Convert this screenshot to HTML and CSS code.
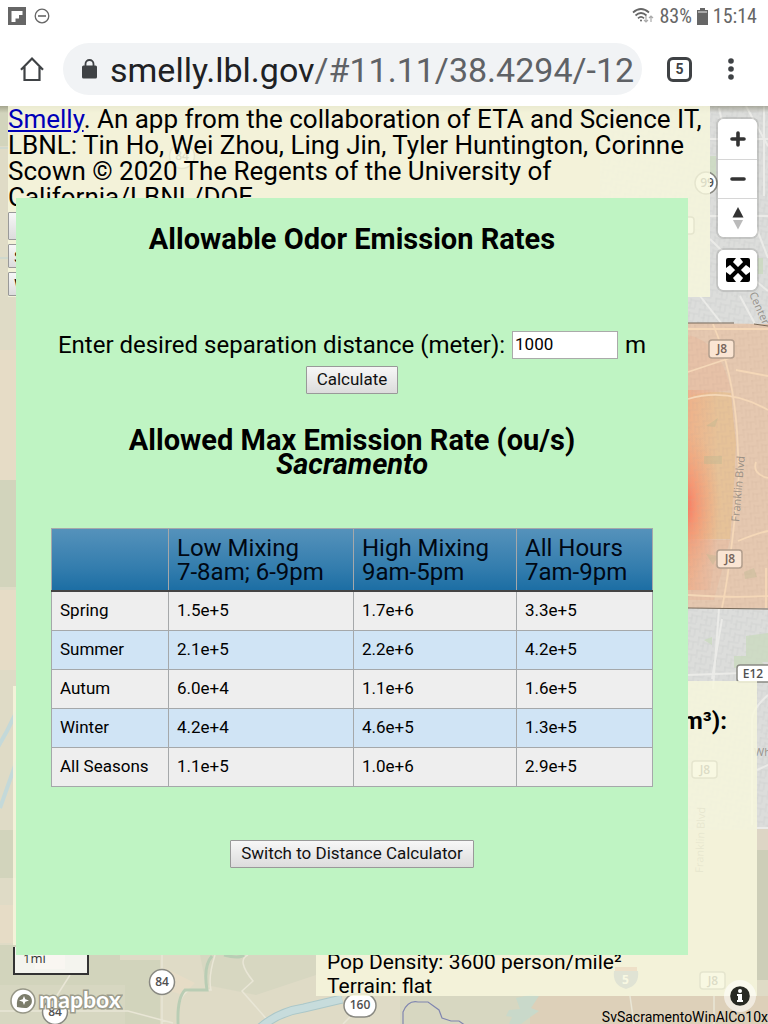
FILE: index.html
```html
<!DOCTYPE html>
<html lang="en">
<head>
<meta charset="utf-8">
<meta name="viewport" content="width=device-width, initial-scale=1">
<title>Smelly</title>
<link rel="stylesheet" href="styles.css">
</head>
<body>
<header class="chrome">
  <div class="status">
    <div class="status-group">
      <svg width="18" height="18" viewBox="0 0 18 18" aria-hidden="true"><path fill="#666" d="M0 0h18v18H0z"/><path fill="#fff" d="M3.500 4H14.500V8H11V11.500H7.500V15H3.500z"/></svg>
      <svg width="16" height="16" viewBox="0 0 16 16" fill="none" stroke="#666" stroke-width="1.300" aria-hidden="true"><circle cx="8" cy="8" r="6.800"/><path stroke-width="1.600" d="M4 8h8"/></svg>
    </div>
    <div class="status-group status-right">
      <svg width="22" height="18" viewBox="0 0 22 18" fill="none" stroke="#666" stroke-width="1.700" aria-hidden="true"><path d="M1 5.500Q9 -1.500 17 5.500M3.500 8.500Q9 3.500 14.500 8.500M6 11.300Q9 8.500 12 11.300"/><circle cx="9" cy="13.500" r="1" fill="#666" stroke="none"/><path stroke="#aaa" stroke-width="1.200" d="M14 9v6m-2-2 2 2 2-2M19 15V9m-2 2 2-2 2 2"/></svg>
      <span>83%</span>
      <svg width="11" height="17" viewBox="0 0 11 17" aria-hidden="true"><path fill="#666" d="M3 0h5v2h3v15H0V2h3z"/><path fill="#aaa" d="M1 3h9v2H1z"/></svg>
      <span>15:14</span>
    </div>
  </div>
  <div class="toolbar">
    <button class="icon-button" aria-label="Home"><svg width="26" height="26" viewBox="0 0 26 26" fill="none" stroke="#3f4245" stroke-width="2.200" aria-hidden="true"><path d="M2 13.800 13 2.500 24 13.800M5.500 11v13h15V11"/></svg></button>
    <div class="address">
      <svg width="15" height="20" viewBox="0 0 15 20" aria-hidden="true"><path fill="none" stroke="#3f4245" stroke-width="1.800" d="M3.500 8V5a4 4 0 0 1 8 0v3"/><rect y="6.500" width="15" height="13" rx="1.500" fill="#3f4245"/></svg>
      <div class="url"><span class="host">smelly.lbl.gov</span>/#11.11/38.4294/-12</div>
    </div>
    <button class="tabs" aria-label="Tabs">5</button>
    <button class="icon-button more" aria-label="Menu"><svg width="6" height="22" viewBox="0 0 6 22" fill="#3f4245" aria-hidden="true"><circle cx="3" cy="3" r="2.800"/><circle cx="3" cy="11" r="2.800"/><circle cx="3" cy="19" r="2.800"/></svg></button>
  </div>
</header>
<main class="map">
  <svg class="map-canvas" viewBox="0 106 768 918" preserveAspectRatio="xMinYMin slice" aria-hidden="true">
    <defs>
      <pattern id="blocks" width="15" height="13" patternUnits="userSpaceOnUse" patternTransform="rotate(8)"><path d="M0 1h11M1 0v9M6 4v9M6 6h9M11 6v7M3 9h4" fill="none" stroke="#cfd0cf" stroke-width=".7"/></pattern>
      <pattern id="blocksPink" width="13" height="12" patternUnits="userSpaceOnUse" patternTransform="rotate(-5)"><path d="M0 1h10M1 0v9M5 4v8M5 6h8M9 6v6" fill="none" stroke="#c9a794" stroke-opacity=".25" stroke-width=".8"/></pattern>
      <radialGradient id="plume" gradientUnits="userSpaceOnUse" cx="682" cy="506" r="80" gradientTransform="translate(682 506) scale(.5 1) translate(-682 -506)"><stop offset="0" stop-color="#fb6552" stop-opacity=".95"/><stop offset=".35" stop-color="#f98968" stop-opacity=".7"/><stop offset="1" stop-color="#f0a878" stop-opacity="0"/></radialGradient>
      <linearGradient id="haze" x2="1" y2="0"><stop stop-color="#f2ab84" stop-opacity=".7"/><stop offset="1" stop-color="#f2ab84" stop-opacity="0"/></linearGradient>
      <linearGradient id="shade" x2="0" y2="1"><stop stop-color="#77765f" stop-opacity=".5"/><stop offset="1" stop-color="#77765f" stop-opacity="0"/></linearGradient>
    </defs>
    <path fill="#dfdbc6" d="M0 106h768v918H0z"/>
    <path fill="#d2d4bc" d="M0 106h16v40H0zM0 480h16v107H0zM0 830h16v48H0zM0 945h120v40H0zM120 960h40v64h-40z"/>
    <path fill="#e6dcc6" d="M0 350h16v130H0zM0 590h16v80H0zM0 905h14v38H0zM165 968l30 15-12 12-26-8zM35 955h30v14H35z"/>
    <path fill="#d7d7c1" d="M0 985h125v39H0zM200 955h116v20l-60 20-50-10zM400 996h130v28H400z"/>
    <path fill="#ddd0b9" d="M530 996h238v28H530z"/>
    <path fill="#dcdddb" d="M600 106h168v724H600z"/><path fill="url(#blocks)" d="M600 106h168v724H600z"/>
    <path fill="#cad9bd" opacity=".75" d="m746 636 22-3v29h-22zM734 656h22l12 12h-34zM710 156h6v34h-6zM758 258h5v16h-5zM704 640l8-3v8z"/>
    <path fill="#ddd5c5" d="M757 828h11v22h-11z"/><path fill="#cdceb8" d="M757 850h11v130h-11z"/>
    <g fill="none" stroke="#ebebe8" stroke-width="2"><path d="M710 139h58M710 216h58M719 108l12 54 37 96M710 239q30 30 58 52M700 296l22 28M746 106l22 40M764 106v90M740 296l15 28M722 619l-10 60M688 675l80-3M768 695q-16 14-16 25v105M757 828h11M757 770l11-5M719 609l-6 80"/></g>
    <path fill="#e5c8b0" d="m688 323 80 1v284H688z"/>
    <path fill="#e6c298" d="M688 396q22-6 43-3 2 25 5 50-2 50-6 96H688z"/>
    <path fill="url(#haze)" d="M688 390h30v150l-8 50h-22z"/>
    <path fill="url(#plume)" d="M688 420h42v120l-8 50h-34z"/>
    <path fill="#eba387" opacity=".2" d="M688 335q32 6 43 55l-43 6zM688 540h42l-16 60h-26z"/>
    <path fill="url(#blocksPink)" d="M688 324h80v284h-80z"/>
    <path fill="#b7b78e" opacity=".35" d="m706 426 12-8-3 9zM704 456h18v8h-18zM706 554l12 2-5 9zM744 572l10-4 3 9-12 2z"/>
    <g fill="none" stroke="#f5d8b8" stroke-width="1.800"><path d="M688 329h80M713 324q20 48 24 107l2 43q-8 90-17 134M688 399q40-12 80 11M738 541q20-8 30-10M688 595q40 3 80 1M736 370l32 6M756 462q-4 12 12 16M766 568v40M688 372l42-14"/></g>
    <path fill="none" stroke="#776756" d="M688 323h46M754 324l14 2M688 608l80 1"/>
    <g fill="none" stroke="#e9e6d6" stroke-width="1.500"><path d="M0 1011h128l45 12M162 955v69M70 975l-14 22M215 955q-7 22-4 35H190q-13 5-13 34M248 955q-12 5 5 26l-11 10 28 32M343 1024l20-20M630 996l4 28M714 996v28"/></g>
    <path fill="none" stroke="#b9cdb4" stroke-width="3" d="M212 956q-9 10-5 34h-22q-8 8-7 34M224 955q15 4 20 0"/>
    <path fill="none" stroke="#abc7c9" stroke-width="9" d="M260 1028q18-16 44-20l38-9"/><path fill="none" stroke="#c7dcdc" stroke-width="7" d="M260 1028q18-16 44-20l38-9"/>
    <path fill="#c9d9ca" d="M516 998q10-2 15-4l8 2-8 12 8 3-10 7-8 6h-12l3-7-6-1 3-6 11-1z"/>
    <path fill="none" stroke="#8086b0" stroke-width="1.200" d="M403 1024v-12q5-12 15-10h10l11 8 3 8 9 3h8l7 5"/>
    <path fill="none" stroke="#c4d9d9" stroke-width="4" d="m17 711-10 20-9 16M17 760 0 808"/><path fill="none" stroke="#b6d4d8" opacity=".4" stroke-width="2" d="M0 148h8M0 258h8"/>
    <g class="shield"><circle cx="162" cy="982" r="12.500"/><text x="162" y="986">84</text><circle cx="55" cy="1012" r="12.500"/><text x="55" y="1016">84</text><circle cx="706" cy="183" r="11"/><text x="707" y="187">99</text><circle cx="182" cy="156" r="12.500"/><text x="182" y="160">84</text><rect x="344" y="994" width="32" height="23" rx="11.500"/><text x="360" y="1009">160</text><rect x="737" y="665" width="38" height="17" rx="3"/><text x="753" y="678">E12</text><rect x="692" y="761" width="25" height="17" rx="3"/><text x="705" y="774">J8</text><rect x="700" y="972" width="25" height="17" rx="3"/><text x="713" y="985">J8</text><rect x="670" y="217" width="24" height="17" rx="3"/></g>
    <g class="shield shield-warm"><rect x="709" y="340" width="25" height="18" rx="3"/><text x="722" y="353">J8</text><rect x="717" y="550" width="25" height="18" rx="3"/><text x="730" y="563">J8</text></g>
    <path fill="#6b7ba5" d="M614 971h24q2 14-12 18-14-4-12-18z"/><path fill="#c06d5f" d="M615 967h22v4h-22z"/><text x="622" y="984" font-size="12" font-weight="700" fill="#fff">5</text>
    <g class="road-label"><text transform="translate(739 522) rotate(-85)">Franklin Blvd</text><text transform="translate(703 873) rotate(-88)">Franklin Blvd</text><text transform="translate(749 294) rotate(66)">Center</text><text x="754" y="756">Wh</text></g>
    <path fill="url(#shade)" d="M0 106h768v7H0z"/>
  </svg>

  <section class="panel intro">
    <p class="credit"><a href="#about">Smelly</a>. An app from the collaboration of ETA and Science IT, LBNL: Tin Ho, Wei Zhou, Ling Jin, Tyler Huntington, Corinne Scown © 2020 The Regents of the University of California/LBNL/DOE.</p>
    <div class="intro-actions">
      <button class="button" aria-label="Location"></button>
      <button class="button">S</button>
      <button class="button">W</button>
    </div>
  </section>

  <section class="panel side-strip"></section>
  <section class="panel legend">
    <h2 class="legend-title">m³):</h2>
    <p class="legend-text">Pop Density: 3600 person/mile²<br>Terrain: flat</p>
  </section>

  <nav class="controls" aria-label="Map controls">
    <div class="control-group">
      <button aria-label="Zoom in"><svg width="16" height="16" viewBox="0 0 16 16" stroke="#333" stroke-width="3.600" stroke-linecap="round"><path d="M8 2v12M2 8h12"/></svg></button>
      <button aria-label="Zoom out"><svg width="16" height="16" viewBox="0 0 16 16" stroke="#333" stroke-width="3.600" stroke-linecap="round"><path d="M2 8h12"/></svg></button>
      <button aria-label="Reset north"><svg width="12" height="24" viewBox="0 0 12 24"><path fill="#333" d="m6 1 5.500 10.500H.5z"/><path fill="#bbb" d="m6 23.500 5-9.500H1z"/></svg></button>
    </div>
    <div class="control-group">
      <button aria-label="Fullscreen"><svg width="26" height="26" viewBox="0 0 26 26"><path fill="none" stroke="#000" stroke-width="4" d="m5 5 16 16M21 5 5 21"/><path d="M1 3q0-2 2-2h8L8 5l-3 3-4 3zM25 3q0-2-2-2h-8l3 4 3 3 4 3zM1 23q0 2 2 2h8l-3-4-3-3-4-3zM25 23q0 2-2 2h-8l3-4 3-3 4-3z"/></svg></button>
    </div>
  </nav>

  <div class="scale">1mi</div>
  <a class="logo" href="#mapbox" aria-label="mapbox">
    <svg width="114" height="30" viewBox="0 0 114 30"><circle cx="14" cy="14" r="12" fill="#fff" stroke="#969686" stroke-width="1.600"/><path fill="#7c7d6b" d="M8 20q-1-8 3-11a7 7 0 1 1 5 12q-3 0-8-1z"/><path fill="#fff" d="m15 9 1.300 3.300L20 13.500l-3.700 1.300L15 18l-1.300-3.200-3.700-1.300 3.700-1.200z"/><text class="logo-text" x="30" y="21">mapbox</text></svg>
  </a>
  <button class="info" aria-label="Attribution"><svg width="20" height="20" viewBox="0 0 20 20"><circle cx="10" cy="10" r="9.800" fill="#282923"/><circle cx="10" cy="5" r="2" fill="#fff"/><path fill="#fff" d="M7 8h5v6h1v2H7v-2h1v-4H7z"/></svg></button>
  <p class="run-name">SvSacramentoWinAlCo10x</p>

  <section class="dialog" role="dialog" aria-labelledby="dialog-title">
    <h1 class="dialog-title" id="dialog-title">Allowable Odor Emission Rates</h1>
    <form class="distance">
      <div class="distance-row"><label for="distance">Enter desired separation distance (meter):</label><input id="distance" type="text" value="1000"><span>m</span></div>
      <button class="button" type="button">Calculate</button>
    </form>
    <h2 class="result-title">Allowed Max Emission Rate (ou/s)<br><em>Sacramento</em></h2>
    <table class="rates">
      <colgroup><col class="season"><col class="low"><col class="high"><col></colgroup>
      <thead><tr><th></th><th>Low Mixing<br>7-8am; 6-9pm</th><th>High Mixing<br>9am-5pm</th><th>All Hours<br>7am-9pm</th></tr></thead>
      <tbody>
        <tr><td>Spring</td><td>1.5e+5</td><td>1.7e+6</td><td>3.3e+5</td></tr>
        <tr><td>Summer</td><td>2.1e+5</td><td>2.2e+6</td><td>4.2e+5</td></tr>
        <tr><td>Autum</td><td>6.0e+4</td><td>1.1e+6</td><td>1.6e+5</td></tr>
        <tr><td>Winter</td><td>4.2e+4</td><td>4.6e+5</td><td>1.3e+5</td></tr>
        <tr><td>All Seasons</td><td>1.1e+5</td><td>1.0e+6</td><td>2.9e+5</td></tr>
      </tbody>
    </table>
    <button class="button" type="button">Switch to Distance Calculator</button>
  </section>
</main>
</body>
</html>
```
FILE: styles.css
```css
* { box-sizing: border-box; }

body {
  margin: 0;
  min-height: 100vh;
  display: flex;
  flex-direction: column;
  font-family: Roboto, "Liberation Sans", sans-serif;
  color: #000;
}

h1, h2, p { margin: 0; }
button { font-family: inherit; color: inherit; }
svg { display: block; }

/* Browser bars */
.chrome { background: #fff; padding-bottom: 11px; }
.status {
  display: flex;
  justify-content: space-between;
  padding: 6px 11px 0 8px;
  height: 32px;
}
.status-group { display: flex; align-items: center; gap: 8px; height: 20px; }
.status-right { gap: 5px; font-size: 20px; line-height: 20px; color: #666; font-family: "Roboto Condensed", Roboto, sans-serif; }
.toolbar { display: flex; align-items: center; padding: 11px 34px 0 16px; }
.icon-button {
  width: 32px;
  height: 32px;
  padding: 0;
  border: 0;
  background: none;
  display: grid;
  place-items: center;
}
.address {
  flex: 1;
  min-width: 0;
  height: 52px;
  margin-left: 15px;
  padding: 0 4px 0 19px;
  border-radius: 26px;
  background: #f1f3f5;
  display: flex;
  align-items: center;
  gap: 13px;
}
.address svg { flex: none; }
.url { font-size: 34px; line-height: 52px; color: #5f6266; white-space: nowrap; padding-top: 2px; }
.host { color: #202124; }
.tabs {
  width: 25px;
  height: 25px;
  margin-left: 25px;
  padding: 0;
  border: 3px solid #3f4245;
  border-radius: 6px;
  background: #fff;
  color: #3f4245;
  font-size: 14px;
  font-weight: 700;
  line-height: 18px;
}
.more { width: 6px; margin-left: 36px; }

/* Map */
.map { position: relative; flex: 1; min-height: 918px; overflow: hidden; }
.map-canvas { position: absolute; inset: 0; width: 100%; height: 100%; font-family: "Open Sans", sans-serif; }
.shield { fill: #fff; stroke: #898982; stroke-width: 1.5px; }
.shield text { font-size: 12px; font-weight: 600; text-anchor: middle; fill: #505050; stroke: none; }
.shield-warm { fill: #fae5d3; stroke: #b29e8d; }
.shield-warm text { fill: #75645a; }
.road-label { font-size: 11px; fill: #858078; fill-opacity: .8; }

.panel { position: absolute; background: rgba(247, 247, 220, .84); }
.intro { top: 0; left: 8px; right: 58px; padding-bottom: 1px; }
.credit { font-size: 26px; line-height: 26px; }
.credit a { color: #0000b8; }
.intro-actions { display: flex; flex-direction: column; align-items: flex-start; gap: 4px; padding-top: 2px; }
.intro-actions .button { width: 160px; height: 24px; padding: 0 5px; text-align: left; }
.intro-actions .button:first-child { height: 28px; }
.side-strip { left: 13px; bottom: 79px; width: 240px; height: 259px; }
.legend {
  left: 316px;
  right: 11px;
  bottom: 28px;
  height: 315px;
  padding: 28px 30px 0 11px;
  display: flex;
  flex-direction: column;
  justify-content: space-between;
}
.legend-title { font-size: 24px; line-height: 24px; text-align: right; }
.legend-text { margin-bottom: -2px; font-size: 21px; line-height: 24px; }

.controls { position: absolute; top: 13px; right: 11px; display: grid; gap: 13px; }
.control-group { width: 39px; border-radius: 6px; background: #fff; box-shadow: 0 0 0 2px rgba(0, 0, 0, .1); overflow: hidden; }
.control-group button {
  width: 100%;
  height: 40px;
  padding: 0;
  border: 0;
  background: #fff;
  display: grid;
  place-items: center;
}
.control-group button + button { border-top: 1px solid #d6d6d6; height: 39px; }

.scale {
  position: absolute;
  left: 13px;
  bottom: 49px;
  width: 76px;
  height: 28px;
  padding-left: 8px;
  border: 2px solid #333;
  border-top: 0;
  background: rgba(255, 255, 255, .75);
  color: #333;
  font-family: "Open Sans", sans-serif;
  font-size: 13px;
  line-height: 22px;
}
.logo { position: absolute; left: 9px; bottom: 7px; }
.logo-text {
  font-family: Lato, sans-serif;
  font-size: 23px;
  font-weight: 700;
  fill: #fff;
  stroke: #9c9c8c;
  stroke-width: 3px;
  paint-order: stroke;
}
.info {
  position: absolute;
  right: 12px;
  bottom: 12px;
  width: 32px;
  height: 32px;
  padding: 0;
  border: 0;
  border-radius: 50%;
  background: rgba(255, 255, 255, .55);
  display: grid;
  place-items: center;
}
.run-name { position: absolute; right: 0; bottom: 0; font-size: 14px; line-height: 14px; }

/* Calculator dialog */
.dialog {
  position: absolute;
  top: 92px;
  left: 16px;
  right: 80px;
  min-height: 757px;
  padding: 24px 35px;
  background: #bff4c3;
  display: flex;
  flex-direction: column;
  align-items: center;
}
.dialog-title { font-size: 29px; line-height: 34px; }
.distance { display: flex; flex-direction: column; align-items: center; gap: 7px; margin-top: 75px; }
.distance-row { display: flex; align-items: center; gap: 7px; font-size: 24px; line-height: 24px; white-space: nowrap; }
.distance input {
  width: 106px;
  height: 28px;
  padding: 0 2px 2px;
  border: 1px solid #aaa;
  background: #fff;
  color: #000;
  font-family: inherit;
  font-size: 17px;
}
.button {
  height: 28px;
  padding: 0 10px 2px;
  border: 1px solid #999;
  border-radius: 1px;
  background: linear-gradient(#f7f7f7, #dcdcdc);
  font-size: 17px;
  line-height: 24px;
  color: #111;
}
.result-title { margin-top: 34px; font-size: 29px; line-height: 24px; text-align: center; }
.rates {
  width: 100%;
  margin: 52px 0 53px;
  table-layout: fixed;
  border-collapse: collapse;
  background: #eee;
  border: 1px solid #a5a8aa;
}
.season { width: 117px; }
.low { width: 185px; }
.high { width: 163px; }
.rates thead { background: linear-gradient(#5592bb, #327cad 66%, #1c6ea4); border-bottom: 2px solid #444; }
.rates th { padding: 7px 8px 6px; border: 1px solid #a5a8aa; border-bottom: 2px solid #444; font-size: 24px; line-height: 24px; font-weight: 400; text-align: left; color: #000814; }
.rates td { height: 39px; padding: 0 8px 2px; border: 1px solid #a5a8aa; font-size: 17px; line-height: 20px; }
.rates tbody tr:nth-child(even) { background: #d0e4f5; }
```
